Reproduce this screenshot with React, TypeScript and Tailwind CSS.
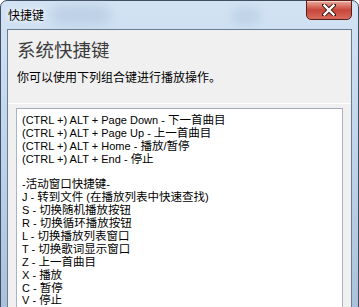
import React from "react";

const lines = [
  "(CTRL +) ALT + Page Down - 下一首曲目",
  "(CTRL +) ALT + Page Up - 上一首曲目",
  "(CTRL +) ALT + Home - 播放/暂停",
  "(CTRL +) ALT + End - 停止",
  "\u00a0",
  "-活动窗口快捷键-",
  "J - 转到文件 (在播放列表中快速查找)",
  "S - 切换随机播放按钮",
  "R - 切换循环播放按钮",
  "L - 切换播放列表窗口",
  "T - 切换歌词显示窗口",
  "Z - 上一首曲目",
  "X - 播放",
  "C - 暂停",
  "V - 停止",
];

function Line({ text }: { text: string }) {
  const parts = text.split(/([\u4e00-\u9fff]+)/);
  return (
    <div className="text-[11px] leading-[12.9px] h-[12.9px] text-black whitespace-pre">
      {parts.map((p, i) =>
        /[\u4e00-\u9fff]/.test(p) ? (
          <span key={i} className="text-[11.5px]">{p}</span>
        ) : (
          <span key={i}>{p}</span>
        )
      )}
    </div>
  );
}

export default function App() {
  return (
    <div className="w-[359px] h-[307px] overflow-hidden bg-white">
      <div
        className="relative w-[359px] h-[320px] rounded-t-[7px] border border-[#3f4f63] bg-gradient-to-b from-[#d3e3f4] via-[#bdd3ea] to-[#a9c0da] flex flex-col"
        style={{ fontFamily: '"Liberation Sans", "Noto Sans CJK SC", sans-serif' }}
      >
        {/* glass blotch */}
        <div className="absolute left-[50px] top-[4px] w-[60px] h-[20px] rounded-full bg-[#9fb8d4] opacity-40 blur-[6px]" />
        <div className="absolute left-[230px] top-[6px] w-[30px] h-[18px] rounded-full bg-[#a8bfd9] opacity-40 blur-[5px]" />
        {/* title bar */}
        <div className="relative h-[28px] flex items-center pl-[7px] pt-[2px]">
          <span className="text-[12px] leading-[16px] text-black" style={{ textShadow: "0 0 6px #fff, 0 0 3px #fff" }}>快捷键</span>
          <div className="absolute right-[6px] top-[-1px] w-[46px] h-[20px] rounded-b-[5px] border border-[#5b1e16] bg-gradient-to-b from-[#e8a99c] via-[#c8463a] to-[#d66b5d] flex items-center justify-center shadow-[inset_0_1px_0_rgba(255,255,255,0.5)]">
            <svg width="14" height="12" viewBox="0 0 14 12">
              <path d="M2 1 L12 11 M12 1 L2 11" stroke="#3a1510" strokeWidth="4.2" strokeLinecap="square" />
              <path d="M2.5 1.5 L11.5 10.5 M11.5 1.5 L2.5 10.5" stroke="#ffffff" strokeWidth="2.4" strokeLinecap="square" />
            </svg>
          </div>
        </div>
        {/* client */}
        <div className="relative mx-[6px] flex-1 border border-[#6a7c92] bg-[#f0f0f0] flex flex-col">
          <div className="pl-[9px] pt-[9px] pb-[17px]">
            <div className="text-[18.5px] leading-[24px] text-[#3c3c3c]">系统快捷键</div>
            <div className="mt-[7px] text-[12px] leading-[16px] text-black">你可以使用下列组合键进行播放操作。</div>
          </div>
          <div className="h-px bg-white" />
          <div className="mt-[4px] ml-[8px] mr-[8px] flex-1 border border-[#abb3c2] border-t-[#a3aec0] bg-white pl-[5px] pt-[5px]">
            {lines.map((l, i) => (
              <Line key={i} text={l} />
            ))}
          </div>
        </div>
      </div>
    </div>
  );
}
